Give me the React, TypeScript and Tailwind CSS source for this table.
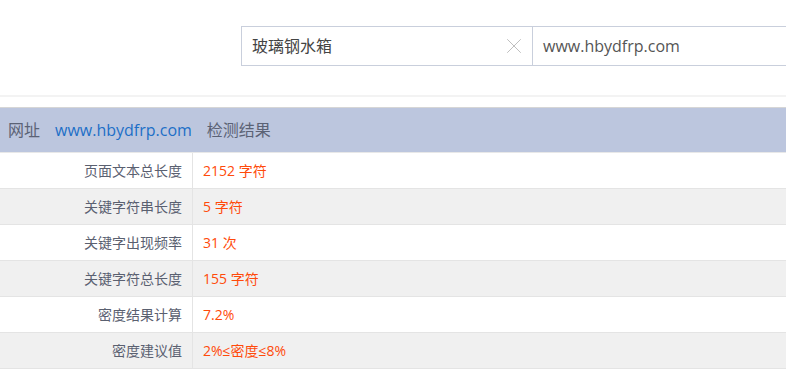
import { X } from "lucide-react"

const rows = [
  { label: "页面文本总长度", value: "2152 字符" },
  { label: "关键字符串长度", value: "5 字符" },
  { label: "关键字出现频率", value: "31 次" },
  { label: "关键字符总长度", value: "155 字符" },
  { label: "密度结果计算", value: "7.2%" },
  { label: "密度建议值", value: "2%≤密度≤8%" },
]

export default function App() {
  return (
    <div
      className="w-[786px] h-[377px] overflow-hidden bg-white"
      style={{ fontFamily: '"Open Sans", "Noto Sans CJK SC", sans-serif' }}
    >
      <div className="h-[97px] border-b-2 border-[#f3f3f3] pt-[26px]">
        <div className="ml-[241px] flex h-[40px] w-[560px] border border-[#c9cfdc]">
          <div className="flex w-[291px] items-center justify-between border-r border-[#c9cfdc] pl-[10px] pr-[5px]">
            <span className="text-[16px] text-[#444]">玻璃钢水箱</span>
            <X className="h-[26px] w-[26px] text-[#b5b5b5]" strokeWidth={0.8} />
          </div>
          <div className="flex flex-1 items-center pl-[10px] text-[16px] text-[#555]">
            www.hbydfrp.com
          </div>
        </div>
      </div>
      <div className="mt-[10px] flex h-[45px] items-center gap-[15px] border-t border-[#d6d6d6] bg-[#bcc6de] pl-[8px] text-[16px] text-[#5b6275]">
        <span>网址</span>
        <span className="text-[#1d6fc7]">www.hbydfrp.com</span>
        <span>检测结果</span>
      </div>
      <div className="border-t border-[#e8e8e8]">
        {rows.map((r, i) => (
          <div
            key={r.label}
            className={`flex h-[36px] border-b border-[#e4e4e4] text-[14px] ${i % 2 === 1 ? "bg-[#f0f0f0]" : "bg-white"}`}
          >
            <div className="flex w-[193px] items-center justify-end border-r border-[#e4e4e4] pr-[10px] text-[#5a6070]">
              {r.label}
            </div>
            <div className="flex items-center pl-[10px] text-[#ff4a0a]">{r.value}</div>
          </div>
        ))}
      </div>
    </div>
  )
}
